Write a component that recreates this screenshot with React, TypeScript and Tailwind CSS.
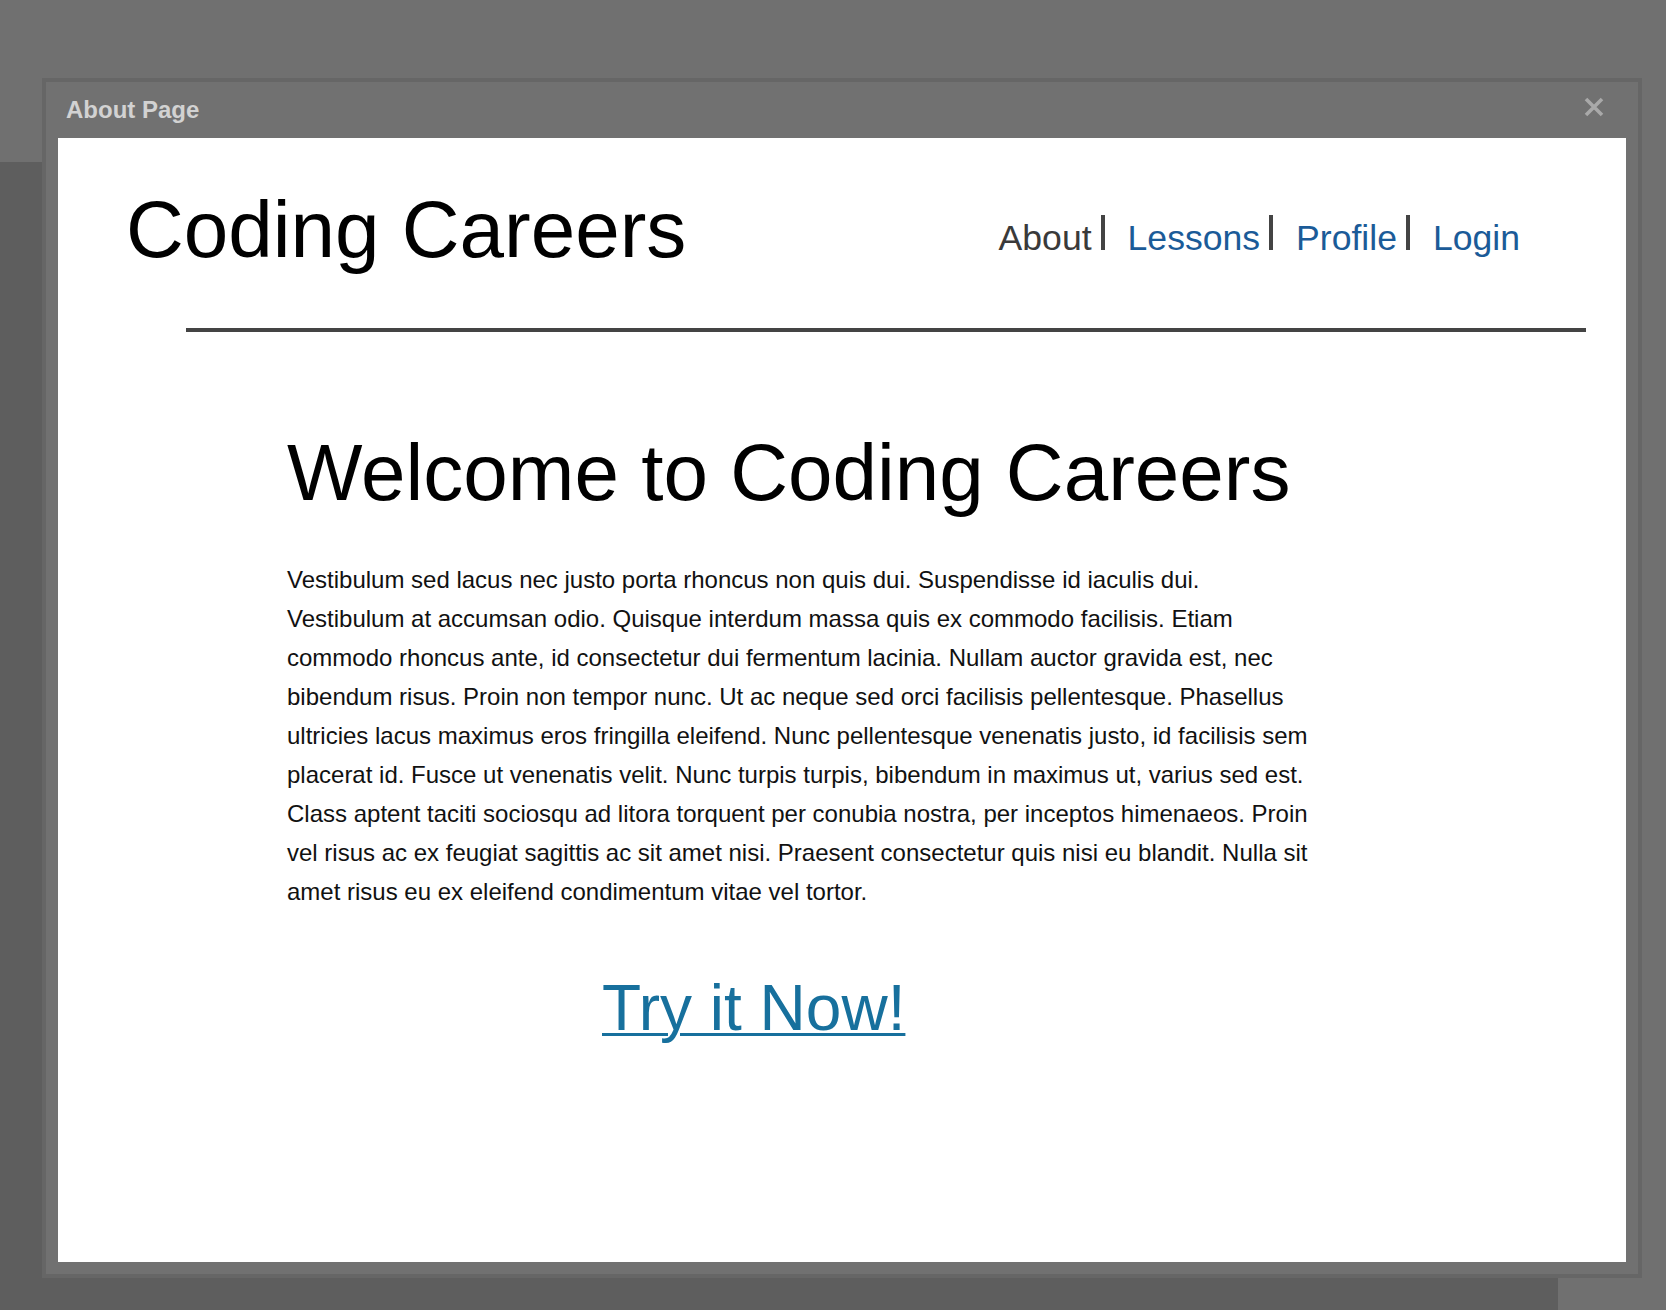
import React from "react";

const lines = [
  "Vestibulum sed lacus nec justo porta rhoncus non quis dui. Suspendisse id iaculis dui.",
  "Vestibulum at accumsan odio. Quisque interdum massa quis ex commodo facilisis. Etiam",
  "commodo rhoncus ante, id consectetur dui fermentum lacinia. Nullam auctor gravida est, nec",
  "bibendum risus. Proin non tempor nunc. Ut ac neque sed orci facilisis pellentesque. Phasellus",
  "ultricies lacus maximus eros fringilla eleifend. Nunc pellentesque venenatis justo, id facilisis sem",
  "placerat id. Fusce ut venenatis velit. Nunc turpis turpis, bibendum in maximus ut, varius sed est.",
  "Class aptent taciti sociosqu ad litora torquent per conubia nostra, per inceptos himenaeos. Proin",
  "vel risus ac ex feugiat sagittis ac sit amet nisi. Praesent consectetur quis nisi eu blandit. Nulla sit",
  "amet risus eu ex eleifend condimentum vitae vel tortor.",
];

function Bar() {
  return <span className="inline-block w-[4px] h-[35px] bg-[#444444] ml-[9px] mr-[23px]" />;
}

export default function App() {
  return (
    <div
      className="relative w-[1666px] h-[1310px] bg-[#707070] overflow-hidden"
      style={{ fontFamily: '"Liberation Sans", Arial, Helvetica, sans-serif' }}
    >
      {/* darker backdrop behind the dialog */}
      <div className="absolute left-0 top-[162px] w-[1558px] h-[1148px] bg-[#5e5e5e]" />

      <div className="relative pt-[78px] pl-[42px]">
        <div className="w-[1600px] h-[1200px] border-4 border-[#666666] bg-[#717171] flex flex-col">
          {/* title bar */}
          <div className="h-[56px] flex items-start justify-between pl-[20px] pr-[34px]">
            <span className="mt-[16px] text-[24px] leading-[24px] font-bold text-[#d2d2d2]">About Page</span>
            <svg className="mt-[15px]" width="20" height="20" viewBox="0 0 20 20">
              <path d="M2 2 L18 18 M18 2 L2 18" stroke="#a9a9a9" strokeWidth="3.6" strokeLinecap="butt" />
            </svg>
          </div>

          {/* body */}
          <div className="mx-[12px] h-[1124px] bg-white text-black">
            <div className="flex items-start justify-between pt-[52px] pl-[68px] pr-[106px]">
              <h1 className="text-[80px] leading-[80px] font-normal text-black whitespace-nowrap">Coding Careers</h1>
              <nav className="mt-[25px] text-[35.6px] leading-[36px] whitespace-nowrap flex items-baseline">
                <span className="text-[#3a3a3a]">About</span>
                <Bar />
                <a className="text-[#1b5b98]" href="#">Lessons</a>
                <Bar />
                <a className="text-[#1b5b98]" href="#">Profile</a>
                <Bar />
                <a className="text-[#1b5b98]" href="#">Login</a>
              </nav>
            </div>

            <div className="mt-[58px] ml-[128px] mr-[40px] h-[4px] bg-[#444444]" />

            <div className="ml-[229px]">
              <h2 className="mt-[101px] text-[80px] leading-[80px] font-normal text-black whitespace-nowrap">
                Welcome to Coding Careers
              </h2>
              <div className="mt-[47px] text-[24px] leading-[39px] text-[#111111]">
                {lines.map((l, i) => (
                  <div key={i} className="whitespace-nowrap">
                    {l}
                  </div>
                ))}
              </div>
            </div>

            <div className="mt-[65px] ml-[544px]">
              <a
                href="#"
                className="text-[64px] leading-[64px] text-[#17709d] underline decoration-[3px] underline-offset-[3px]"
              >
                Try it Now!
              </a>
            </div>
          </div>
        </div>
      </div>
    </div>
  );
}
